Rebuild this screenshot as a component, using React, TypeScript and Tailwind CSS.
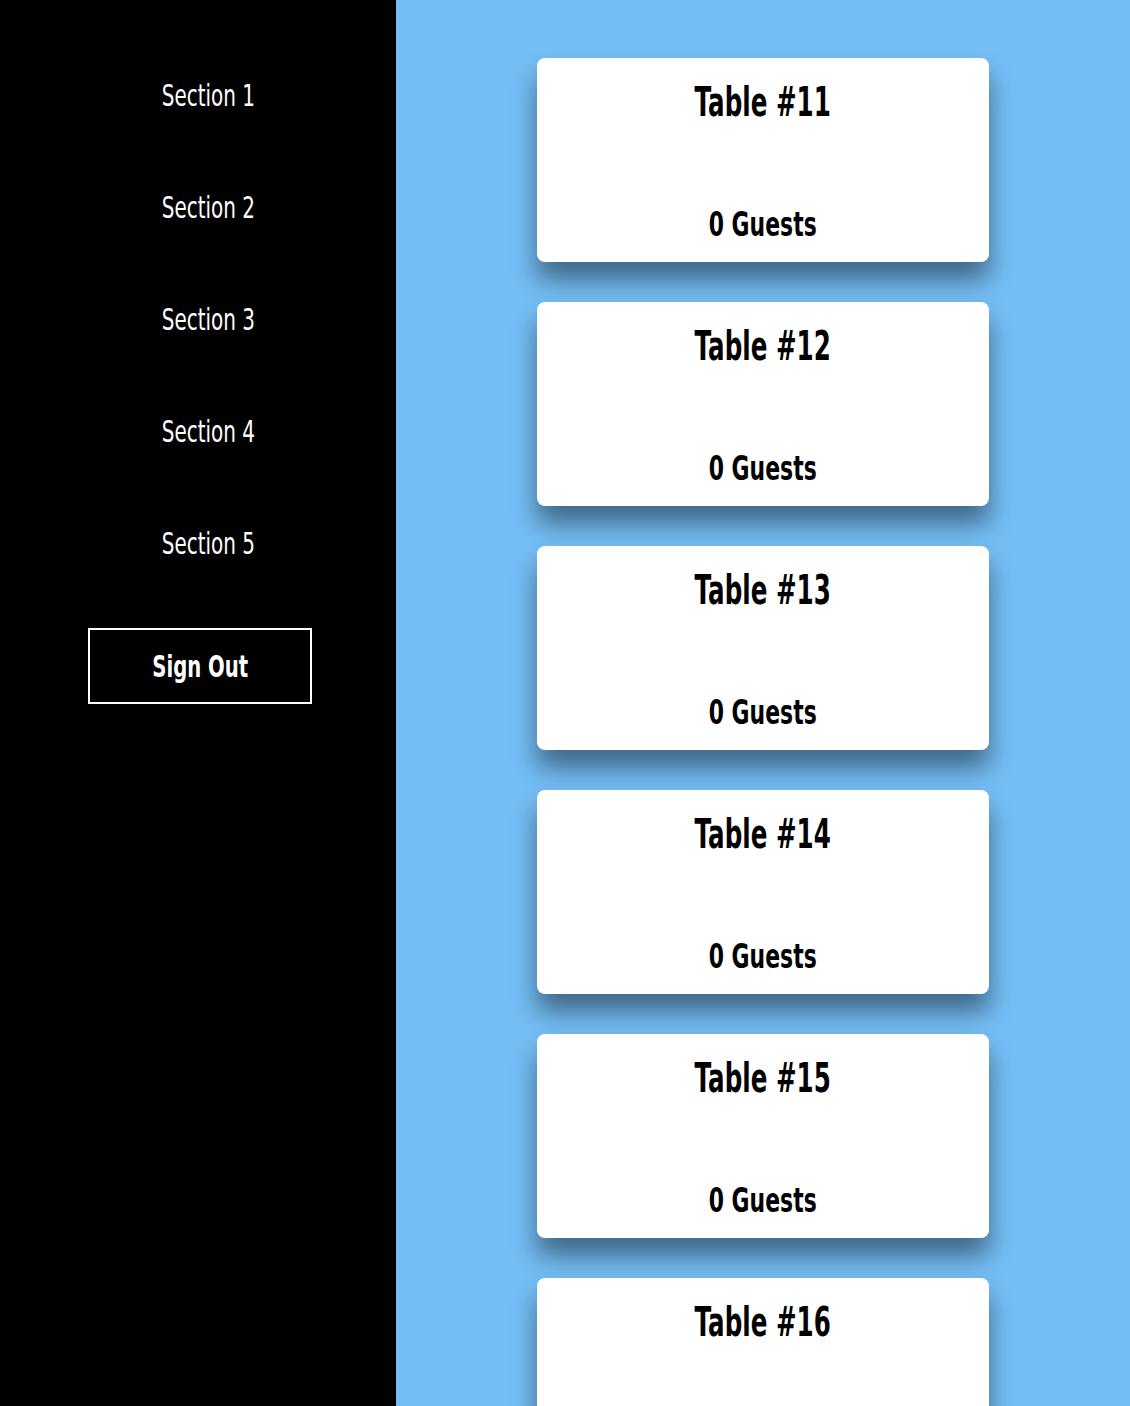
const sections = ["Section 1", "Section 2", "Section 3", "Section 4", "Section 5"];
const tables = [11, 12, 13, 14, 15, 16];

// no condensed face is installed, so the narrow look is squeezed out of DejaVu Sans
const TableCard = ({ num }: { num: number }) => (
  <div className="w-[452px] h-[204px] shrink-0 rounded-lg bg-white shadow-[0_18px_26px_rgba(0,0,0,0.45)] flex flex-col items-center text-black">
    <h2 className="mt-[19px] text-[41px] leading-[50px] font-bold">
      <span className="inline-block scale-x-[0.6]">Table #{num}</span>
    </h2>
    <p className="mt-[77px] text-[34px] leading-[40px] font-bold">
      <span className="inline-block scale-x-[0.645]">0 Guests</span>
    </p>
  </div>
);

export default function App() {
  return (
    <div className="flex h-screen overflow-hidden font-['DejaVu_Sans',sans-serif]">
      <aside className="w-[396px] shrink-0 bg-black text-white flex flex-col items-center pt-[39px]">
        {sections.map((s) => (
          <a key={s} href="#" className="h-[112px] pl-[20px] flex items-center justify-center text-[31px]">
            <span className="inline-block scale-x-[0.645]">{s}</span>
          </a>
        ))}
        <button className="mt-[29px] mr-[-4px] w-[224px] h-[76px] border-2 border-white text-[30px] font-bold text-white">
          <span className="inline-block scale-x-[0.655]">Sign Out</span>
        </button>
      </aside>
      <main className="flex-1 bg-[#74bef6] flex flex-col items-center pt-[58px] gap-[40px]">
        {tables.map((t) => (
          <TableCard key={t} num={t} />
        ))}
      </main>
    </div>
  );
}
